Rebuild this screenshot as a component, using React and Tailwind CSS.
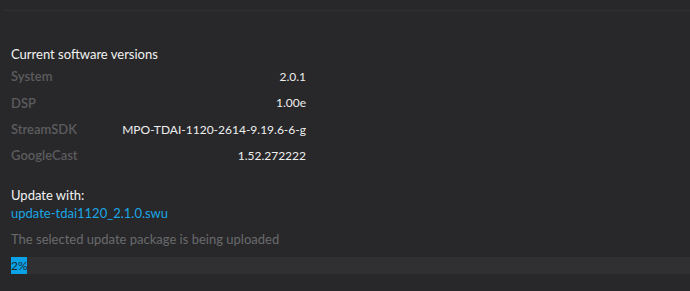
import React from "react";

const versions = [
  { name: "System", value: "2.0.1" },
  { name: "DSP", value: "1.00e" },
  { name: "StreamSDK", value: "MPO-TDAI-1120-2614-9.19.6-6-g" },
  { name: "GoogleCast", value: "1.52.272222" },
];

const App = () => {
  const progress = 2;
  return (
    <div
      className="w-[690px] h-[291px] bg-[#28282a] overflow-hidden text-[13px]"
      style={{ fontFamily: "Lato, 'Open Sans', sans-serif" }}
    >
      <div className="pt-[10px] pl-[3px]">
        <div className="h-px bg-[#303033]" />
      </div>
      <div className="pl-[11px] pt-[33px]">
        <div className="text-[#f2f2f2] leading-[20px]">Current software versions</div>
        <div className="w-[295px] flex flex-col">
          {versions.map((v) => (
            <div key={v.name} className="flex justify-between items-center h-[26.3px]">
              <span className="text-[#5c5c5e] font-semibold">{v.name}</span>
              <span className="text-[#eeeeee] text-[12px]">{v.value}</span>
            </div>
          ))}
        </div>
        <div className="mt-[17px] text-[#f2f2f2] leading-[18px]">Update with:</div>
        <div className="text-[#1ba6e4] text-[13px] leading-[18px]">update-tdai1120_2.1.0.swu</div>
        <div className="mt-[8px] text-[#6a6a6c] leading-[18px]">
          The selected update package is being uploaded
        </div>
        <div className="mt-[9px] h-[17px] bg-[#303032] flex">
          <div
            className="bg-[#0aa2e6] text-[#1e2a33] text-[12px] leading-[17px] h-full"
            style={{ width: "16px" }}
          >
            {progress}%
          </div>
        </div>
      </div>
    </div>
  );
};

export default App;
